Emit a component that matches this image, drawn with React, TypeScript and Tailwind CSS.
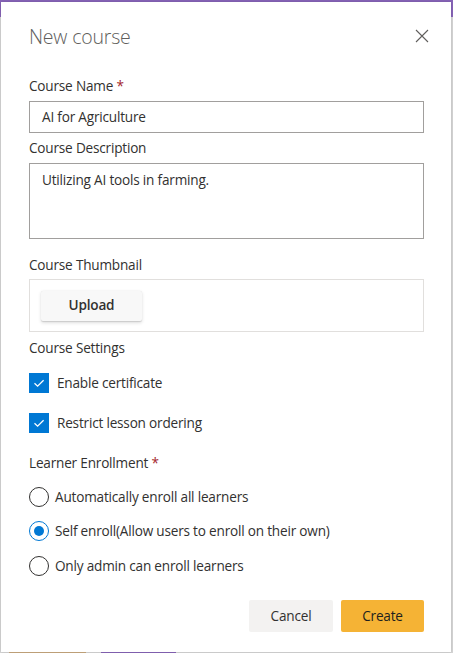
import React from "react";

const font = { fontFamily: '"Open Sans", "Noto Sans", sans-serif' };

function Check() {
  return (
    <span className="flex h-[20px] w-[20px] items-center justify-center bg-[#0078d4]">
      <svg width="20" height="20" viewBox="0 0 20 20">
        <path d="M5.5 10.3 L8.6 13.2 L14.6 7.2" fill="none" stroke="#ffffff" strokeWidth="1.3" />
      </svg>
    </span>
  );
}

function Radio({ on }: { on?: boolean }) {
  return (
    <span
      className={
        on
          ? "flex h-[20px] w-[20px] shrink-0 items-center justify-center rounded-full border border-[#0078d4]"
          : "flex h-[20px] w-[20px] shrink-0 items-center justify-center rounded-full border border-[#323130]"
      }
    >
      {on ? <span className="h-[10px] w-[10px] rounded-full bg-[#0078d4]" /> : null}
    </span>
  );
}

export default function App() {
  return (
    <div
      className="relative h-[653px] w-[453px] overflow-hidden bg-[#d6d6d6] pl-[1px] pr-[2px] pt-[2px]"
      style={font}
    >
      <div className="absolute left-0 top-0 h-[17px] w-full bg-[#8764b8]" />
      <div className="absolute bottom-0 left-[9px] h-[1px] w-[77px] bg-[#c8a97e]" />
      <div className="absolute bottom-0 left-[101px] h-[1px] w-[75px] bg-[#8764b8]" />
      <div className="relative flex h-[650px] flex-col bg-white pl-[28px] pr-[27px] text-[13.6px] tracking-[-0.2px] text-[#323130] shadow-[0_0_3px_rgba(0,0,0,0.15)]">
        <div className="mt-[21px] flex h-[28px] items-center justify-between">
          <span className="text-[19.5px] font-light leading-[28px] tracking-[-0.2px] text-[#605e5c]">New course</span>
          <svg width="14" height="14" viewBox="0 0 14 14" className="mr-[-5px] mt-[-2px]">
            <path d="M1 1 L13 13 M13 1 L1 13" stroke="#605e5c" strokeWidth="1.1" />
          </svg>
        </div>

        <div className="mt-[25px] h-[20px] leading-[20px]">
          Course Name <span className="text-[#a4262c]">*</span>
        </div>
        <div className="mt-[5px] flex h-[32px] items-center border border-[#a19f9d] px-[12px]">
          AI for Agriculture
        </div>

        <div className="mt-[5px] h-[20px] leading-[20px]">Course Description</div>
        <div className="mt-[5px] h-[76px] border border-[#a19f9d] px-[12px] pt-[6px] leading-[20px]">
          Utilizing AI tools in farming.
        </div>

        <div className="mt-[16px] h-[20px] leading-[20px]">Course Thumbnail</div>
        <div className="mt-[4px] flex h-[53px] items-center border border-[#e1dfdd] px-[11px]">
          <span className="flex h-[30px] w-[101px] items-center justify-center rounded-[2px] bg-[#f8f8f8] font-semibold shadow-[0_1.6px_3.6px_rgba(0,0,0,0.13),0_0.3px_0.9px_rgba(0,0,0,0.11)]">
            Upload
          </span>
        </div>

        <div className="mt-[6px] h-[20px] leading-[20px]">Course Settings</div>
        <div className="mt-[15px] flex h-[20px] items-center gap-[8px]">
          <Check />
          <span>Enable certificate</span>
        </div>
        <div className="mt-[20px] flex h-[20px] items-center gap-[8px]">
          <Check />
          <span>Restrict lesson ordering</span>
        </div>

        <div className="mt-[20px] h-[20px] leading-[20px]">
          Learner Enrollment <span className="text-[#a4262c]">*</span>
        </div>
        <div className="mt-[14px] flex h-[20px] items-center gap-[6px]">
          <Radio />
          <span>Automatically enroll all learners</span>
        </div>
        <div className="mt-[14px] flex h-[20px] items-center gap-[6px]">
          <Radio on />
          <span>Self enroll(Allow users to enroll on their own)</span>
        </div>
        <div className="mt-[15px] flex h-[20px] items-center gap-[6px]">
          <Radio />
          <span>Only admin can enroll learners</span>
        </div>

        <div className="mt-[24px] flex justify-end gap-[8px]">
          <span className="flex h-[32px] w-[84px] items-center justify-center rounded-[2px] bg-[#f3f2f1] text-[#323130]">
            Cancel
          </span>
          <span className="flex h-[32px] w-[83px] items-center justify-center rounded-[2px] bg-[#f5b335] text-[#201f1e]">
            Create
          </span>
        </div>
      </div>
    </div>
  );
}
